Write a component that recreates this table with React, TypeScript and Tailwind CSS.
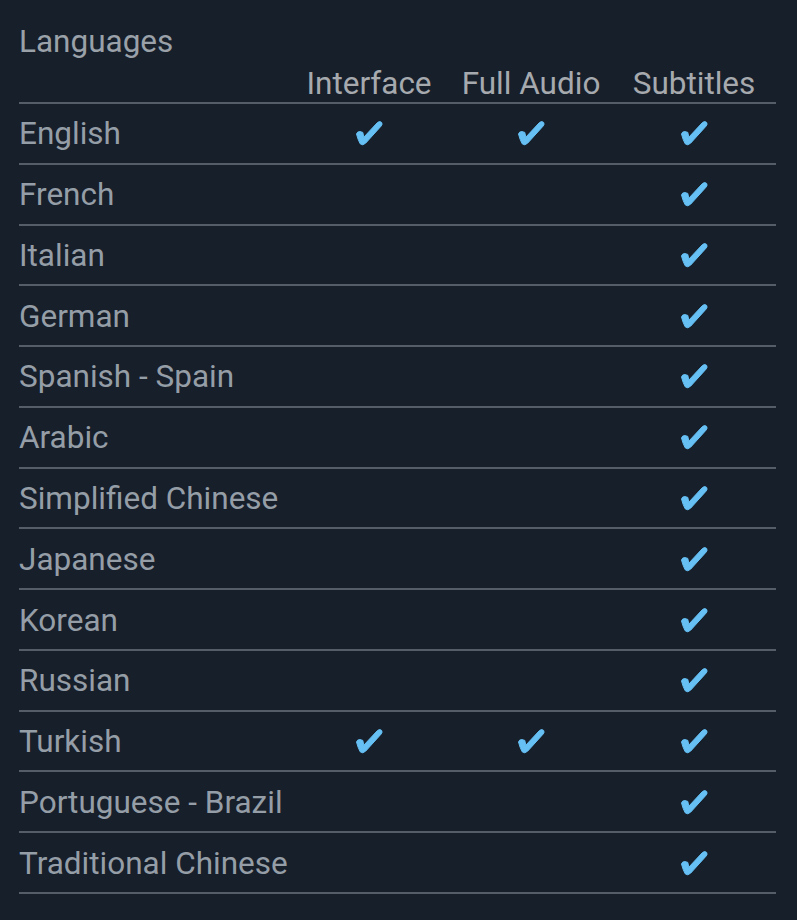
import React from "react";

const rows: [string, boolean, boolean, boolean][] = [
  ["English", true, true, true],
  ["French", false, false, true],
  ["Italian", false, false, true],
  ["German", false, false, true],
  ["Spanish - Spain", false, false, true],
  ["Arabic", false, false, true],
  ["Simplified Chinese", false, false, true],
  ["Japanese", false, false, true],
  ["Korean", false, false, true],
  ["Russian", false, false, true],
  ["Turkish", true, true, true],
  ["Portuguese - Brazil", false, false, true],
  ["Traditional Chinese", false, false, true],
];

function Check() {
  return (
    <svg width="28" height="26" viewBox="0 0 28 26" aria-hidden="true">
      <path
        d="M1.5 14 Q2.2 11.4 5 11.6 L7.8 12.4 L8.8 17.2 L22.4 2.6 Q24.8 0.6 26.6 2.4 Q27.8 4.2 26 6.2 L10.8 23 Q7.6 26.2 5.2 23.8 Q3 20 1.5 14 Z"
        fill="#66c0f4"
        stroke="#66c0f4"
        strokeWidth="1"
        strokeLinejoin="round"
      />
    </svg>
  );
}

export default function App() {
  return (
    <div
      className="min-h-[920px] w-[797px] bg-[#171f2b] text-[#959ea7] text-[31.5px] leading-[36px]"
      style={{ fontFamily: "Roboto, 'Noto Sans', sans-serif" }}
    >
      <div className="pl-[19px] pr-[21px] pt-[24px]">
        <div className="h-[42px] text-[#9aa1a8]">Languages</div>
        <div className="grid grid-cols-[269px_162px_162px_164px] border-b-2 border-[#555d68] text-[#a6aaae]">
          <div />
          <div className="text-center">Interface</div>
          <div className="text-center">Full Audio</div>
          <div className="text-center">Subtitles</div>
        </div>
        {rows.map(([name, a, b, c]) => (
          <div
            key={name}
            className="grid grid-cols-[269px_162px_162px_164px] h-[60.77px] items-center border-b-2 border-[#555d68]"
          >
            <div className="pt-[2px]">{name}</div>
            <div className="flex justify-center">{a && <Check />}</div>
            <div className="flex justify-center">{b && <Check />}</div>
            <div className="flex justify-center">{c && <Check />}</div>
          </div>
        ))}
      </div>
    </div>
  );
}
